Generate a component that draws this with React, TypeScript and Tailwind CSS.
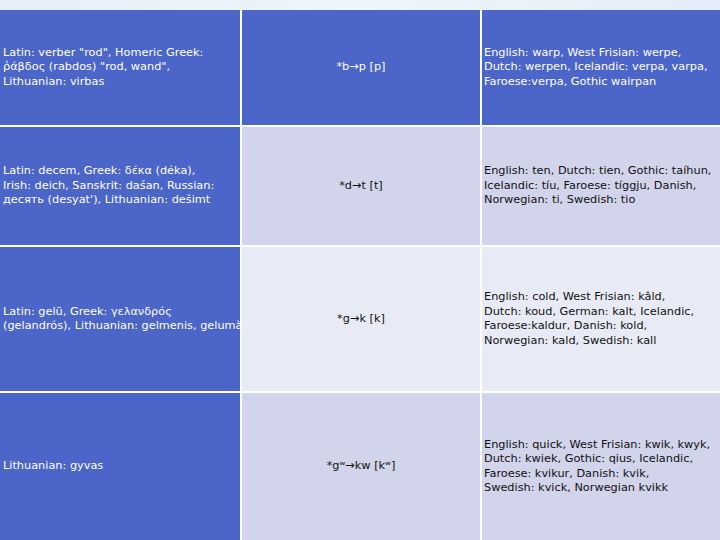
const rows = [
  {
    left: ['Latin: verber "rod", Homeric Greek:', 'ῥάβδος (rabdos) "rod, wand",', 'Lithuanian: virbas'],
    mid: '*b→p [p]',
    right: ['English: warp, West Frisian: werpe,', 'Dutch: werpen, Icelandic: verpa, varpa,', 'Faroese:verpa, Gothic wairpan'],
    h: 'h-[115px]',
    tone: 'bg-[#4c65c9] text-white',
  },
  {
    left: ['Latin: decem, Greek: δέκα (déka),', 'Irish: deich, Sanskrit: daśan, Russian:', "десять (desyat'), Lithuanian: dešimt"],
    mid: '*d→t [t]',
    right: ['English: ten, Dutch: tien, Gothic: taíhun,', 'Icelandic: tíu, Faroese: tíggju, Danish,', 'Norwegian: ti, Swedish: tio'],
    h: 'h-[118px]',
    tone: 'bg-[#d1d4eb] text-[#111]',
  },
  {
    left: ['Latin: gelū, Greek: γελανδρός', '(gelandrós), Lithuanian: gelmenis, gelumà'],
    mid: '*g→k [k]',
    right: ['English: cold, West Frisian: kâld,', 'Dutch: koud, German: kalt, Icelandic,', 'Faroese:kaldur, Danish: kold,', 'Norwegian: kald, Swedish: kall'],
    h: 'h-[144px]',
    tone: 'bg-[#e8ebf6] text-[#111]',
  },
  {
    left: ['Lithuanian: gyvas'],
    mid: '*gʷ→kw [kʷ]',
    right: ['English: quick, West Frisian: kwik, kwyk,', 'Dutch: kwiek, Gothic: qius, Icelandic,', 'Faroese: kvikur, Danish: kvik,', 'Swedish: kvick, Norwegian kvikk'],
    h: 'h-[147px]',
    tone: 'bg-[#d1d4eb] text-[#111]',
  },
];

export default function App() {
  return (
    <div
      className="w-[720px] h-[540px] overflow-hidden bg-white text-[11.3px] leading-[14.5px]"
      style={{ fontFamily: '"DejaVu Sans", sans-serif' }}
    >
      <div className="h-[10px] bg-gradient-to-r from-[#e6eef8] via-[#eef5fb] to-[#e4edf7]" />
      <div className="flex flex-col gap-[2px]">
        {rows.map((r, i) => (
          <div key={i} className={`grid grid-cols-[240px_238px_238px] gap-[2px] ${r.h}`}>
            <div className="flex flex-col justify-center overflow-hidden whitespace-nowrap bg-[#4c65c9] text-white pl-[3px]">
              {r.left.map((l, j) => (
                <p key={j}>{l}</p>
              ))}
            </div>
            <div className={`flex items-center justify-center ${r.tone}`}>
              <p>{r.mid}</p>
            </div>
            <div className={`flex flex-col justify-center overflow-hidden whitespace-nowrap pl-[2px] ${r.tone}`}>
              {r.right.map((l, j) => (
                <p key={j}>{l}</p>
              ))}
            </div>
          </div>
        ))}
      </div>
    </div>
  );
}
